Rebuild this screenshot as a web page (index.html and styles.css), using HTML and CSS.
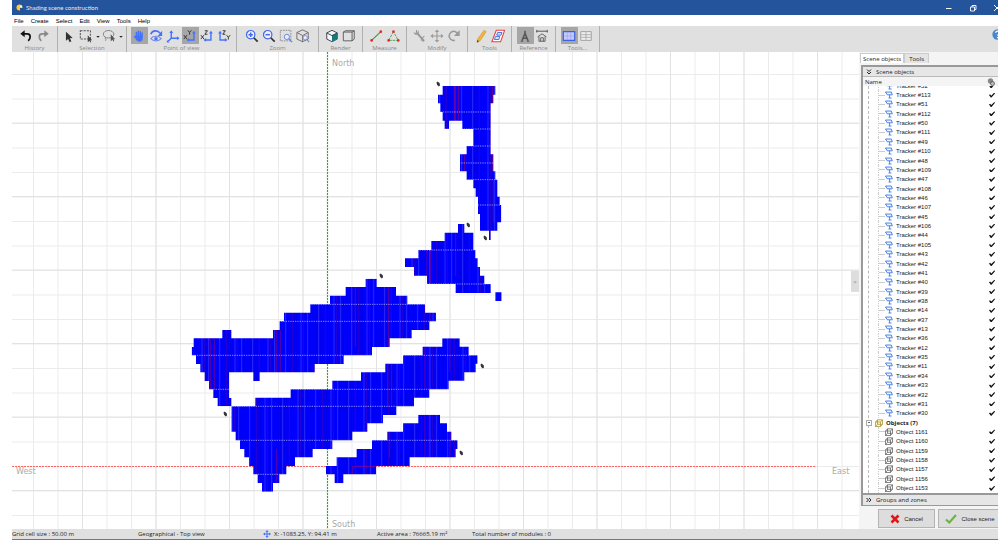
FILE: index.html
```html
<!DOCTYPE html>
<html lang="en">
<head>
<meta charset="utf-8">
<title>Shading scene construction</title>
<link rel="stylesheet" href="styles.css">
</head>
<body>
<svg class="defs" width="0" height="0" aria-hidden="true">
  <symbol id="tracker" viewBox="0 0 8 8"><path d="M.5 1h5.800l1 2.800H2.200zM4.600 4v3M3.500 7h3" fill="#eaf1ff" stroke="#3c78e6" stroke-width=".9"/></symbol>
  <symbol id="object" viewBox="0 0 8 8"><path d="M.5 3h5v4.500h-5zM.5 3l2-2.200h5l-2 2.200M7.500.8v4.500l-2 2.200M2.500.8v4.500l-2 2.200M2.500 5.300h5" fill="none" stroke="#555" stroke-width=".7"/></symbol>
  <symbol id="group" viewBox="0 0 8 8"><path d="M.5 3h5v4.500h-5zM.5 3l2-2.200h5l-2 2.200M7.500.8v4.500l-2 2.200M2.500.8v4.500l-2 2.200M2.500 5.300h5" fill="#fff9d8" stroke="#a08a20" stroke-width=".7"/></symbol>
</svg>
<div class="app">
  <header class="titlebar">
    <svg class="logo" viewBox="0 0 8 8"><circle cx="3.500" cy="3.500" r="3" fill="#ffc928"/><path d="M4 4h4v1.500L5.500 8H4z" fill="#24549c"/><circle cx="5" cy="2.500" r="1" fill="#fff"/></svg>
    <h1 class="title">Shading scene construction</h1>
    <button class="win" aria-label="Minimize"><svg viewBox="0 0 8 8"><path d="M1 4.500h5.500" stroke="#fff"/></svg></button>
    <button class="win" aria-label="Restore"><svg viewBox="0 0 8 8"><path d="M1.500 3h4v4h-4zM3 3V1.500h4v4H5.500" fill="none" stroke="#fff" stroke-width=".9"/></svg></button>
    <button class="win" aria-label="Close"><svg viewBox="0 0 8 8"><path d="M1 1l6 6M7 1L1 7" stroke="#fff"/></svg></button>
  </header>
  <nav class="menu">
    <button>File</button><button>Create</button><button>Select</button><button>Edit</button><button>View</button><button>Tools</button><button>Help</button>
  </nav>
  <div class="toolbar">
    <section class="group g-history"><div class="icons">
      <button aria-label="Undo"><svg viewBox="0 0 16 16"><path d="M4 5.500h5.500c4 0 4.300 5 1 8" fill="none" stroke="#111" stroke-width="2"/><path d="M1.500 5.500L6.500 1.500v8z" fill="#111"/></svg></button>
      <button aria-label="Redo"><svg viewBox="0 0 16 16"><path d="M12 5.500H7c-4 0-4.300 5-1 8" fill="none" stroke="#888" stroke-width="2"/><path d="M14.500 5.500L9.500 1.500v8z" fill="#888"/></svg></button>
    </div><span class="caption">History</span></section>
    <section class="group g-selection"><div class="icons">
      <button aria-label="Pointer"><svg viewBox="0 0 16 16"><path d="M4.500 3v10.500l2.500-2 1.700 3.500 2-.9-1.700-3.400 3.200-.4z" fill="#333"/></svg></button>
      <button aria-label="Rectangle selection"><svg viewBox="0 0 16 16"><path d="M1.500 2h11.500v9.500H1.500z" fill="none" stroke="#555" stroke-width="1.200" stroke-dasharray="2.500 1.200"/><path d="M10 7v8l2-1.600 1 2 1-.6-1-2h2z" fill="#444"/></svg></button>
      <button class="caret" aria-label="Rectangle options"><svg viewBox="0 0 6 16"><path d="M1 8h4l-2 2z" fill="#222"/></svg></button>
      <button aria-label="Lasso selection"><svg viewBox="0 0 16 16"><ellipse cx="7.500" cy="6" rx="6" ry="4.300" fill="none" stroke="#777"/><path d="M4 9.500c-2 1 2 2 0 4" fill="none" stroke="#777"/><path d="M10 6v8l2-1.600 1 2 1-.6-1-2h2z" fill="#555"/></svg></button>
      <button class="caret" aria-label="Lasso options"><svg viewBox="0 0 6 16"><path d="M1 8h4l-2 2z" fill="#222"/></svg></button>
    </div><span class="caption">Selection</span></section>
    <section class="group g-view"><div class="icons">
      <button class="on" aria-label="Pan"><svg viewBox="0 0 16 16"><path d="M5 8V4M7.200 7V2.500M9.400 7V3M11.500 8V4.500M4.500 10L3 8.500" stroke="#4371ff" stroke-width="1.700" stroke-linecap="round"/><path d="M4.200 7h8v3.500c0 3-1.400 4-4 4s-3.500-1.500-5-5z" fill="#4371ff"/></svg></button>
      <button aria-label="Orbit"><svg viewBox="0 0 16 16"><path d="M2 6c2-5 8-5 11-1" fill="none" stroke="#4371ff" stroke-width="1.800"/><path d="M15 2v6h-5z" fill="#4371ff"/><path d="M2 11c3-3.500 9-3.500 12 0-3 3.500-9 3.500-12 0z" fill="none" stroke="#6e8ce8" stroke-width="1.200"/><circle cx="8" cy="11" r="2" fill="#4371ff"/></svg></button>
      <button aria-label="Perspective axes"><svg viewBox="0 0 16 16"><path d="M6 3v7.500h8M6 10.500L2.500 14" fill="none" stroke="#4371ff" stroke-width="1.600"/><path d="M3.800 4.500L6 1.500l2.200 3zM12.500 8.300l3 2.200-3 2.200zM1 12.500V15.500h3z" fill="#4371ff"/></svg></button>
      <button class="on" aria-label="XY view"><svg viewBox="0 0 16 16"><path d="M12.500 4v8.500H5.500" fill="none" stroke="#4371ff" stroke-width="1.600"/><path d="M10.300 5l2.200-3 2.200 3zM7 10.300l-3 2.200 3 2.200z" fill="#4371ff"/><path d="M5.500 1.500l2 2.500 2-2.500M7.500 4v2.500M1 7l3.500 4.500M4.500 7L1 11.500" fill="none" stroke="#333" stroke-width="1.100"/></svg></button>
      <button aria-label="XZ view"><svg viewBox="0 0 16 16"><path d="M12.500 4v8.500H5.500" fill="none" stroke="#4371ff" stroke-width="1.600"/><path d="M10.300 5l2.200-3 2.200 3zM7 10.300l-3 2.200 3 2.200z" fill="#4371ff"/><path d="M5.500 2h3l-3 4h3M1 7l3.500 4.500M4.500 7L1 11.500" fill="none" stroke="#333" stroke-width="1.100"/></svg></button>
      <button aria-label="YZ view"><svg viewBox="0 0 16 16"><path d="M3.500 4v8.500h6" fill="none" stroke="#4371ff" stroke-width="1.600"/><path d="M1.300 5l2.200-3 2.200 3zM9 10.300l3 2.200-3 2.200z" fill="#4371ff"/><path d="M6.500 2h3l-3 4h3M11 7l2 2.500L15 7M13 9.500V12" fill="none" stroke="#333" stroke-width="1.100"/></svg></button>
    </div><span class="caption">Point of view</span></section>
    <section class="group g-zoom"><div class="icons">
      <button aria-label="Zoom in"><svg viewBox="0 0 16 16"><circle cx="6.500" cy="6.500" r="4.800" fill="#eef" stroke="#4169e8" stroke-width="1.400"/><path d="M4 6.500h5M6.500 4v5" stroke="#4169e8" stroke-width="1.700"/><path d="M10 10l4.500 4.500" stroke="#333" stroke-width="2"/></svg></button>
      <button aria-label="Zoom out"><svg viewBox="0 0 16 16"><circle cx="6.500" cy="6.500" r="4.800" fill="#eef" stroke="#4169e8" stroke-width="1.400"/><path d="M4 6.500h5" stroke="#4169e8" stroke-width="1.700"/><path d="M10 10l4.500 4.500" stroke="#333" stroke-width="2"/></svg></button>
      <button aria-label="Zoom window"><svg viewBox="0 0 16 16"><path d="M1.500 1.500h12v12h-12z" fill="none" stroke="#888" stroke-dasharray="2 1"/><circle cx="9" cy="9" r="3" fill="#e8ecff" stroke="#5a7fe8"/><path d="M11 11l4 4" stroke="#5a7fe8" stroke-width="1.500"/></svg></button>
      <button aria-label="Zoom to fit"><svg viewBox="0 0 16 16"><path d="M7.500 1l6.500 3v7.500l-6.500 3-6.500-3V4zM1 4l6.500 3.500L14 4M7.500 7.500v7" fill="none" stroke="#666"/><circle cx="10.500" cy="10" r="2.500" fill="#e8ecff" stroke="#6a87d8"/><path d="M12.500 12l2.500 3" stroke="#6a87d8" stroke-width="1.300"/></svg></button>
    </div><span class="caption">Zoom</span></section>
    <section class="group g-small"><div class="icons">
      <button aria-label="Shaded render"><svg viewBox="0 0 16 16"><path d="M8 1.500l6 3v7l-6 3-6-3v-7z" fill="#f4f8f8" stroke="#334"/><path d="M8 7.500l6-3v7l-6 3z" fill="#16797c"/><path d="M2 4.500l6 3 6-3" fill="none" stroke="#234"/></svg></button>
      <button aria-label="Wireframe"><svg viewBox="0 0 16 16"><path d="M1.500 3.500h10v10h-10zM1.500 3.500l2.500-1.500h10v9.500l-2.500 2M11.500 3.500L14 2" fill="none" stroke="#555"/></svg></button>
    </div><span class="caption">Render</span></section>
    <section class="group g-small"><div class="icons">
      <button aria-label="Distance"><svg viewBox="0 0 16 16"><path d="M3 13L13.500 3" stroke="#3e9c48" stroke-width="1.400"/><circle cx="3" cy="13" r="1.500" fill="#e22"/><circle cx="13.500" cy="3" r="1.500" fill="#e22"/></svg></button>
      <button aria-label="Angle"><svg viewBox="0 0 16 16"><path d="M8.500 3L3 13h11z" fill="none" stroke="#4a9c50" stroke-dasharray="3 1"/><circle cx="8.500" cy="3" r="1.500" fill="#e22"/><circle cx="3" cy="13" r="1.500" fill="#e22"/><circle cx="14" cy="13" r="1.500" fill="#e22"/></svg></button>
    </div><span class="caption">Measure</span></section>
    <section class="group g-modify"><div class="icons">
      <button aria-label="Edit"><svg viewBox="0 0 16 16"><path d="M5 5l7 8" stroke="#999" stroke-width="2.400" stroke-linecap="round"/><path d="M4 1v3L2 6M1 4l2 2h3V2M13 8l-3 3M9 12l3 2" fill="none" stroke="#999" stroke-width="1.200"/></svg></button>
      <button aria-label="Move"><svg viewBox="0 0 16 16"><path d="M8 3v10M3 8h10" stroke="#999" stroke-width="1.200"/><path d="M8 .5l2.500 3h-5zM8 15.500l2.500-3h-5zM.5 8l3-2.500v5zM15.500 8l-3-2.500v5z" fill="#999"/></svg></button>
      <button aria-label="Rotate"><svg viewBox="0 0 16 16"><path d="M12 5C7-.5 1 5 3 10c1 2 3 3.500 6 3" fill="none" stroke="#999" stroke-width="1.800"/><path d="M14.500 1v7H8z" fill="#999"/></svg></button>
    </div><span class="caption">Modify</span></section>
    <section class="group g-small"><div class="icons">
      <button aria-label="Draw"><svg viewBox="0 0 16 16"><path d="M11.500 1.500l2.500 1.500-7 10.500-3.500 2 .5-4z" fill="#f2b23c" stroke="#c48624" stroke-width=".5"/><path d="M3.800 12.500l2 1.500-2.500 1.500z" fill="#444"/></svg></button>
      <button aria-label="Field tool"><svg viewBox="0 0 16 16"><path d="M6 1.500h9.500L11 14.500H1z" fill="#fff" stroke="#e84040" stroke-width="1.200"/><path d="M7.500 4h5l-1 3h-5zM5 8.500h5L9 12H4z" fill="#dce6ff" stroke="#3a65d8"/></svg></button>
    </div><span class="caption">Tools</span></section>
    <section class="group g-small"><div class="icons">
      <button class="on" aria-label="Compass reference"><svg viewBox="0 0 16 16"><path d="M8 2v3M8 5l-3.500 8.500M8 5l3.500 8.500M5.500 10.500h5" fill="none" stroke="#555" stroke-width="1.700"/><path d="M3 14h3M10 14h3" stroke="#555"/></svg></button>
      <button aria-label="Building reference"><svg viewBox="0 0 16 16"><path d="M2 2.500h12M2 1v3M14 1v3" stroke="#444"/><path d="M3 9l5-3.500L13 9M4.500 8.500V14h7V8.500M6.500 14v-4h3v4" fill="none" stroke="#555"/></svg></button>
    </div><span class="caption">Reference</span></section>
    <section class="group g-small"><div class="icons">
      <button class="on" aria-label="Table layout"><svg viewBox="0 0 16 16"><path d="M1.500 3h13v10h-13z" fill="#c6caff" stroke="#3c62e4" stroke-width="1.400"/><path d="M2 8h12M6 3.500v9M10 3.500v9" stroke="#8c9cec" stroke-width=".6"/></svg></button>
      <button aria-label="Grid layout"><svg viewBox="0 0 16 16"><path d="M2 3h12v10H2z" fill="#eee" stroke="#999"/><path d="M2.500 6.500h11M2.500 9.500h11M8 3.500v9" stroke="#999" stroke-width=".8"/></svg></button>
    </div><span class="caption">Tools...</span></section>
    <button class="help" aria-label="Help"><svg viewBox="0 0 10 10"><circle cx="5" cy="5" r="4.700" fill="#4a87c8"/><path d="M3.300 3.500c.2-2 3.400-2 3.400 0C6.700 5 5 4.700 5 6.200M5 7.300v1" fill="none" stroke="#fff" stroke-width="1.100"/></svg></button>
  </div>
  <div class="work">
    <main class="scene">
      <svg class="plan" viewBox="12 52 847 477" role="img" aria-label="Top view of the scene">
        <defs>
          <pattern id="minor" x="327" y="466" width="24.500" height="24.500" patternUnits="userSpaceOnUse"><path d="M.5 0v24.500M0 .5h24.500" stroke="#ebebeb"/></pattern>
          <pattern id="major" x="302.500" y="490" width="73.500" height="73.500" patternUnits="userSpaceOnUse"><path d="M.5 0v73.500M0 .5h73.500" stroke="#e2e2e2"/></pattern>
          <pattern id="rows" width="99" height="102" patternUnits="userSpaceOnUse"><path d="M0 0h99v102H0z" fill="#0000ff"/><path d="M6 0v102M13 0v102M26 0v102M33 0v102M46 0v102M53 0v102M79 0v102M93 0v102" stroke="#0000cc" stroke-width="1.200"/><path d="M20 0v102M66 0v102M86 0v102" stroke="#3c3cff" stroke-width="2"/><path d="M40 0v102M73 0v102" stroke="#5000a0" stroke-width="1.500"/></pattern>
          <g id="person"><path d="M-1.500-1.500l1.200-1 2 1.700.3 2.200-1.200 1-1.800-1.700z" fill="#333"/></g>
          <clipPath id="c1"><path d="M128 48h158v26H128zM114 74h166v26H114zM121 100h151v26H121zM128 126h144v26H128zM134 152h13v25h-13zM187 152h85v25h-85zM220 177h52v51h-52zM200 228h72v25h-72zM180 253h100v51H180zM200 304h86v25h-86zM220 329h72v26h-72zM227 355h65v25h-65zM234 380h65v25h-65zM234 405h70v27h-70zM240 432h64v25h-64zM240 457h52v25h-52zM267 482h5v28h-5z"/></clipPath>
          <clipPath id="c2"><path d="M204 132h19v26h-19zM164 158h86v25h-86zM124 183h126v27H124zM85 210h171v25H85zM45 235h218v26H45zM72 261h198v26H72zM111 287h172v25H111zM197 312h105v27H197zM316 337h19v26h-19z"/></clipPath>
          <clipPath id="c3"><path d="M557 26h33v25h-33zM497 51h151v26H497zM450 77h232v26H450zM391 103h344v25H391zM312 128h456v26H312zM299 154h449v26H299zM279 180h416v25H279zM127 180h27v25h-27zM41 205h588v26H41zM35 231h541v25H35zM48 256h443v26H48zM61 282h343v25H61zM74 307h73v26H74zM220 307h19v26h-19zM87 333h60v25H87zM100 358h47v26h-47zM113 384h41v25h-41z"/></clipPath>
          <clipPath id="c4"><path d="M697 25h52v25h-52zM638 50h138v26H638zM579 76h224v25H579zM526 101h271v26H526zM453 127h310v25H453zM367 152h349v26H367zM242 178h416v25H242zM136 203h476v26H136zM64 229h495v26H64zM64 255h455v25H64zM64 280h408v25H64zM77 305h350v26H77zM90 331h277v26H90zM103 357h205v25H103zM117 382h138v26H117zM130 408h99v25h-99zM143 433h65v26h-65zM156 459h33v26h-33z"/></clipPath>
          <clipPath id="c5"><path d="M625 254h65v26h-65zM579 280h132v25H579zM532 305h192v26H532zM486 331h257v26H486zM440 357h297v25H440zM380 382h219v26H380zM348 408h150v25H348zM374 433h26v27h-26z"/></clipPath>
        </defs>
        <path d="M12 52h847v477H12z" fill="url(#minor)"/>
        <path d="M12 52h847v477H12z" fill="url(#major)"/>
        <path d="M327.500 52v477" stroke="#e4f4e4" stroke-width="2"/>
        <path d="M327.500 52v477" stroke="#38a038" stroke-dasharray="2 1"/>
        <path d="M12 466.500h804" stroke="#ff6060" stroke-dasharray="2 1"/>
        <g transform="translate(400 70) scale(.3333)"><g clip-path="url(#c1)"><path d="M100 40h220v480H100z" fill="url(#rows)"/><path d="M163 48v104M176 48v104M278 48v52M194 253v51M278 253v50M280 329v130" stroke="#a00060" stroke-width="2"/><path d="M100 126h220M100 177h220M100 228h220M100 279h220M100 329h220M100 405h220" stroke="#c8c8ff" stroke-width="2" stroke-dasharray="4 3"/></g></g>
        <g transform="translate(390 180) scale(.3333)"><g clip-path="url(#c2)"><path d="M40 130h300v240H40z" fill="url(#rows)"/><path d="M111 210v102M122 210v102M197 158v130" stroke="#90007a" stroke-width="2"/><path d="M40 210h300M40 312h300" stroke="#c8c8ff" stroke-width="2" stroke-dasharray="4 3"/></g></g>
        <g transform="translate(180 270) scale(.3333)"><g clip-path="url(#c3)"><path d="M30 20h750v400H30z" fill="url(#rows)"/><path d="M91 205v153M103 205v153M289 180v127M301 180v127M403 282v25M515 51v180M526 51v180M625 51v180M750 128v52" stroke="#90007a" stroke-width="2"/><path d="M30 103h750M30 154h750M30 256h750M30 358h750" stroke="#c8c8ff" stroke-width="2" stroke-dasharray="4 3"/></g></g>
        <g transform="translate(210 330) scale(.3333)"><g clip-path="url(#c4)"><path d="M60 20h750v470H60z" fill="url(#rows)"/><path d="M533 101v128M545 101v128M645 50v128M658 50v128M720 25v102M200 357v100" stroke="#90007a" stroke-width="2"/><path d="M60 76h750M60 178h750M60 229h750M60 331h750M60 433h750" stroke="#c8c8ff" stroke-width="2" stroke-dasharray="4 3"/></g></g>
        <g transform="translate(210 330) scale(.3333)"><g clip-path="url(#c5)"><path d="M340 250h410v220H340z" fill="url(#rows)"/><path d="M539 305v77M645 254v128M658 254v128M720 305v77M427 408v25" stroke="#90007a" stroke-width="2"/><path d="M340 331h410" stroke="#c8c8ff" stroke-width="2" stroke-dasharray="4 3"/><path d="M430 409h170" stroke="#c00060" stroke-width="2"/></g></g>
        <use href="#person" x="438" y="84"/><use href="#person" x="468" y="225"/><use href="#person" x="485" y="238"/><use href="#person" x="381" y="276"/><use href="#person" x="482" y="366"/><use href="#person" x="225" y="414"/><use href="#person" x="461" y="453"/>
        <text x="332" y="66">North</text><text x="332" y="527">South</text><text x="16" y="474">West</text><text x="832" y="474">East</text>
      </svg>
      <button class="collapse" aria-label="Collapse panel">&gt;</button>
    </main>
    <aside class="side">
      <div class="tabs"><button class="tab current">Scene objects</button><button class="tab">Tools</button></div>
      <section class="box">
        <button class="head"><svg viewBox="0 0 6 6"><path d="M1 .5l2 2 2-2M1 3l2 2 2-2" fill="none" stroke="#222"/></svg>Scene objects</button>
        <div class="columns"><span>Name</span><svg viewBox="0 0 8 8"><circle cx="3.500" cy="3" r="2.700" fill="#888"/><circle cx="5.500" cy="5.500" r="2" fill="#bbb" stroke="#444" stroke-width=".7"/></svg></div>
        <div class="viewport"><ul class="tree" id="tree"></ul></div>
        <button class="head foot"><svg viewBox="0 0 6 6"><path d="M.5 1l2 2-2 2M3 1l2 2-2 2" fill="none" stroke="#222"/></svg>Groups and zones</button>
      </section>
      <div class="actions">
        <button class="action"><svg viewBox="0 0 10 10"><path d="M1.500 1.500l7 7M8.500 1.500l-7 7" stroke="#e01818" stroke-width="2.600"/></svg>Cancel</button>
        <button class="action"><svg viewBox="0 0 12 10"><path d="M1 5.500L4.300 8.500 11 1" fill="none" stroke="#6eb446" stroke-width="2.200"/></svg>Close scene</button>
      </div>
    </aside>
  </div>
  <footer class="status">
    <span class="s-grid">Grid cell size : 50.00 m</span>
    <span class="s-view">Geographical - Top view</span>
    <span class="s-pos"><svg viewBox="0 0 16 16"><path d="M8 3v10M3 8h10" stroke="#4371ff" stroke-width="2"/><path d="M8 0l3 4H5zM8 16l3-4H5zM0 8l4-3v6zM16 8l-4-3v6z" fill="#4371ff"/></svg>X: -1083.25, Y: 94.41 m</span>
    <span class="s-area">Active area : 76665.19 m²</span>
    <span>Total number of modules : 0</span>
  </footer>
</div>
<script src="app.js"></script>
</body>
</html>
```
FILE: styles.css
```css
* { box-sizing: border-box; }
body { margin: 0; background: #fff; font: 6px/8px "Open Sans", "Noto Sans", sans-serif; color: #222; }
button { font: inherit; color: inherit; border: 0; padding: 0; margin: 0; background: none; }
svg { display: block; flex: none; }
.defs { position: absolute; }
.app { display: flex; flex-direction: column; height: 100vh; margin: 0 2px 0 12px; overflow: hidden; }

.titlebar { display: flex; align-items: center; flex: none; height: 15px; background: #24549c; color: #e4ecf8; padding-left: 4px; overflow: hidden; }
.logo { width: 8px; height: 8px; margin-right: 2px; }
.title { flex: 1; margin: 0; font: 6px/8px Lato, sans-serif; }
.win { width: 24px; height: 15px; flex: none; }
.win:last-child { margin-right: -11px; }
.win svg { width: 8px; height: 8px; margin: 0 auto; }

.menu { display: flex; flex: none; align-items: center; gap: 7px; height: 11px; padding-left: 2px; font-family: "Liberation Sans", Arial, sans-serif; color: #000; }

.toolbar { display: flex; flex: none; height: 26px; background: #e0e0e0; overflow: hidden; }
.group { flex: none; border-right: 1px solid #b0b0b0; padding-top: 1px; }
.icons { display: flex; justify-content: center; }
.icons button { width: 17px; height: 17px; flex: none; }
.icons button.caret { width: 6px; }
.icons button.on { background: #a6a6a6; }
.icons svg { width: 14px; height: 14px; margin: 0 auto; }
.icons .caret svg { width: 6px; }
.caption { display: block; text-align: center; font: 6px/8px "Open Sans", "Noto Sans", sans-serif; color: #888; }
.g-history { width: 46px; }
.g-selection { width: 69px; }
.g-view { width: 110px; }
.g-zoom { width: 82px; }
.g-small { width: 44px; }
.g-modify { width: 61px; }
.help { margin: 3px -5px 0 auto; align-self: flex-start; }
.help svg { width: 11px; height: 11px; }

.work { display: flex; flex: 1; min-height: 0; }
.scene { position: relative; flex: 1; min-width: 0; overflow: hidden; }
.plan { width: 100%; height: 100%; }
.plan text { font: 8px "DejaVu Sans", Verdana, sans-serif; fill: #aaa; }
.collapse { position: absolute; right: 0; top: 46%; width: 8px; height: 21px; background: #ddd; color: #666; }

.side { display: flex; flex-direction: column; width: 139px; flex: none; background: #f4f4f4; padding-left: 1px; }
.tabs { display: flex; padding-top: 1px; flex: none; }
.tab { height: 10px; padding: 0 4px; border: 1px solid #ccc; border-bottom: 0; background: #e4e4e4; }
.tab.current { padding: 0 2px; background: #fff; }
.box { display: flex; flex-direction: column; flex: 1; min-height: 0; margin: 2px 0 0 1px; border: solid #999; border-width: 2px 0 1px 2px; background: #fff; }
.head { display: flex; align-items: center; gap: 4px; flex: none; height: 10px; padding-left: 3px; background: #e6e6e6; border-bottom: 1px solid #bbb; }
.head svg { width: 6px; height: 6px; }
.foot { border-top: 2px solid #999; border-bottom: 0; height: 12px; }
.columns { display: flex; justify-content: space-between; align-items: center; flex: none; height: 9px; padding: 0 3px 0 2px; background: #f4f4f4; }
.columns svg { width: 8px; height: 8px; }
.viewport { flex: 1; min-height: 0; overflow: hidden; display: flex; }
.tree { flex: 1; display: flex; flex-direction: column; list-style: none; margin: -5px 0 0 5px; padding: 0; border-left: 1px dashed #bbb; }
.row { flex: 1; min-height: 0; display: flex; align-items: center; padding: 0 3px 0 9px; }
.row::before { content: ""; width: 6px; height: 100%; flex: none; border-left: 1px dotted #ccc; background: linear-gradient(#ccc, #ccc) center / 100% 1px no-repeat; }
.row label { display: flex; align-items: center; flex: 1; gap: 3px; font: 6px/8px "Liberation Sans", Arial, sans-serif; }
.row svg { width: 8px; height: 8px; }
.row input { appearance: none; width: 6px; height: 5px; margin: 0; flex: none; background: #111; clip-path: polygon(0 50%, 18% 35%, 38% 62%, 90% 0, 100% 18%, 42% 100%, 30% 100%); }
.row.parent { padding-left: 0; margin-left: -3px; }
.row.parent::before { display: none; }
.row.parent .toggle { width: 6px; height: 6px; flex: none; border: 1px solid #aaa; background: linear-gradient(#666, #666) center / 2px 1px no-repeat #fff; margin-right: 3px; }
.row.parent label { font-weight: 700; font-family: "Open Sans", "Noto Sans", sans-serif; }

.actions { display: flex; flex: none; gap: 3px; height: 23px; padding: 3px 0 1px 18px; overflow: hidden; }
.action { display: flex; align-items: center; justify-content: center; gap: 4px; flex: none; width: 57px; border: 1px solid #b4b4b4; background: #ddd; font-family: "Liberation Sans", Arial, sans-serif; }
.action:last-child { width: 64px; }
.action svg { width: 10px; height: 10px; }
.action:last-child svg { width: 12px; }

.status { display: flex; align-items: center; flex: none; height: 11px; background: #e0e0e0; border-bottom: 1px solid #777; white-space: nowrap; }
.s-grid { width: 126px; }
.s-view { width: 125px; }
.s-pos { display: flex; align-items: center; gap: 3px; width: 114px; }
.s-pos svg { width: 8px; height: 8px; }
.s-area { width: 95px; }
```
FILE: app.js
```js
const trackers = [52, 113, 51, 112, 50, 111, 49, 110, 48, 109, 47, 108, 46, 107, 45, 106, 44, 105,
  43, 42, 41, 40, 39, 38, 14, 37, 13, 36, 12, 35, 11, 34, 33, 32, 31, 30];
const objects = [1161, 1160, 1159, 1158, 1157, 1156, 1153];

const icon = (name) => `<svg aria-hidden="true"><use href="#${name}"/></svg>`;
const leaf = (name, text, id) =>
  `<li class="row"><label for="${id}">${icon(name)}${text}</label><input type="checkbox" id="${id}" checked></li>`;

document.getElementById("tree").innerHTML =
  trackers.map((n) => leaf("tracker", `Tracker #${n}`, `tracker-${n}`)).join("") +
  `<li class="row parent"><button class="toggle" aria-label="Collapse objects"></button><label>${icon("group")}Objects (${objects.length})</label></li>` +
  objects.map((n) => leaf("object", `Object ${n}`, `object-${n}`)).join("");
```
